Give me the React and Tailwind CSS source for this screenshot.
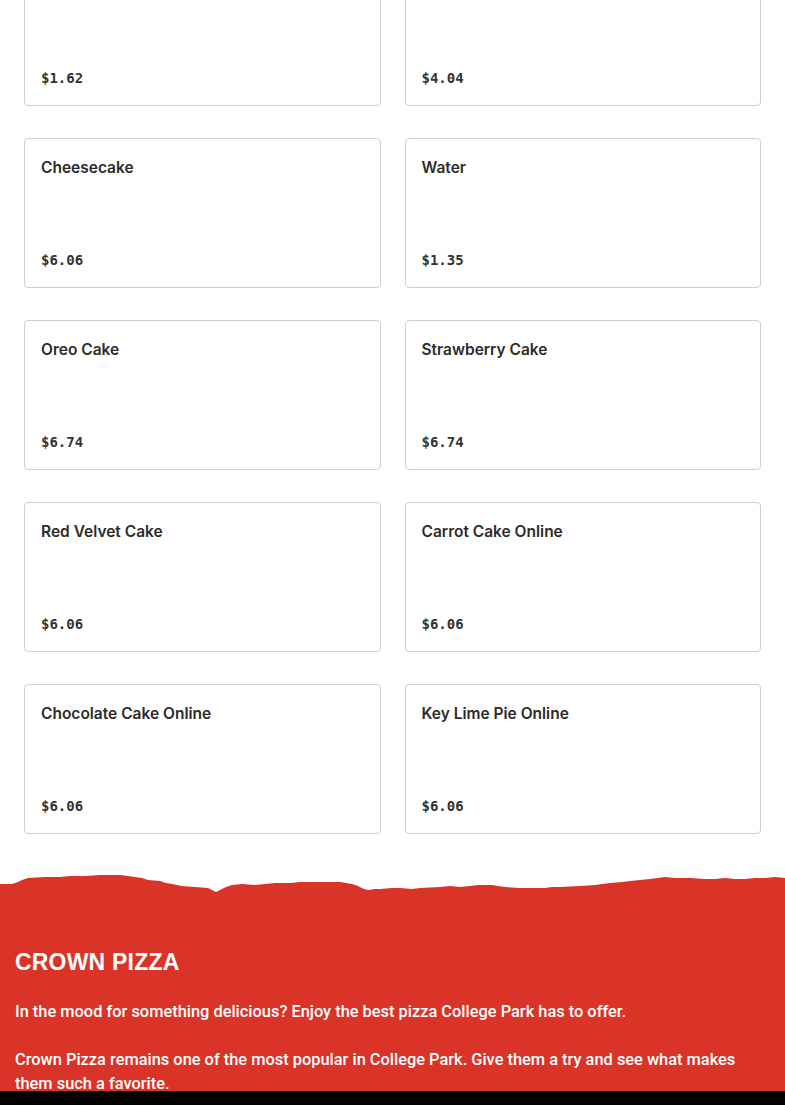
import React from "react";

const items = [
    { name: "", price: "$1.62" },
    { name: "", price: "$4.04" },
    { name: "Cheesecake", price: "$6.06" },
    { name: "Water", price: "$1.35" },
    { name: "Oreo Cake", price: "$6.74" },
    { name: "Strawberry Cake", price: "$6.74" },
    { name: "Red Velvet Cake", price: "$6.06" },
    { name: "Carrot Cake Online", price: "$6.06" },
    { name: "Chocolate Cake Online", price: "$6.06" },
    { name: "Key Lime Pie Online", price: "$6.06" },
];

function MenuCard({ item }) {
    return (
        <div className="h-[150px] flex flex-col justify-between border border-[#cfcfcf] rounded-[4px] bg-white px-4 pt-4 pb-4">
            <h3 className="text-[15.5px] leading-[26px] font-semibold text-[#2b2b2b] font-['Inter',sans-serif]">
                {item.name}
            </h3>
            <span className="text-[14px] leading-[22px] font-semibold text-[#333333] font-['DejaVu_Sans_Mono',monospace]">
                {item.price}
            </span>
        </div>
    );
}

export default function App() {
    return (
        <div className="min-h-screen bg-white overflow-hidden">

            {/* MENU GRID */}
            <div className="grid grid-cols-2 gap-x-6 gap-y-8 px-6 mt-[-44px]">
                {items.map((item, i) => (
                    <MenuCard key={i} item={item} />
                ))}
            </div>

            {/* TORN EDGE */}
            <svg
                className="block w-full h-[26px] mt-[34px]"
                viewBox="0 0 785 26"
                preserveAspectRatio="none"
            >
                <path
                    fill="#d93427"
                    d="M0 16 L12 16 L18 14 L22 12 L28 10 L45 9 L60 9 L70 8 L85 8 L100 7 L120 7 L128 8 L135 9 L142 10 L148 12 L160 13 L166 15 L172 16 L182 18 L195 19 L208 20 L212 22 L216 24 L220 22 L226 19 L232 17 L242 16 L255 17 L265 16 L275 15 L290 15 L300 14 L320 14 L340 14 L346 15 L352 16 L358 18 L364 21 L368 22 L375 21 L380 21 L392 20 L400 20 L412 21 L420 20 L440 19 L450 18 L460 19 L470 18 L478 17 L492 17 L498 18 L505 19 L520 20 L545 20 L552 19 L560 19 L580 18 L595 17 L610 15 L622 14 L630 13 L640 12 L650 11 L665 9 L675 10 L690 10 L705 11 L715 11 L725 10 L735 11 L745 11 L755 10 L765 10 L775 9 L785 10 L785 26 L0 26 Z"
                />
            </svg>

            {/* ABOUT */}
            <section className="bg-[#d93427] text-white pl-[15px] pr-[20px] pt-[54px] pb-10">
                <h2 className="text-[23px] leading-7 font-black uppercase tracking-[0.2px] mb-6 font-['Liberation_Sans',Arial,sans-serif]">
                    Crown Pizza
                </h2>
                <div className="font-['Roboto',sans-serif] text-[16.4px] leading-6 font-medium">
                    <p className="mb-6">
                        In the mood for something delicious? Enjoy the best pizza College Park has to offer.
                    </p>
                    <p>
                        Crown Pizza remains one of the most popular in College Park. Give them a try and see what makes them such a favorite.
                    </p>
                </div>
            </section>

            {/* BOTTOM BAR */}
            <div className="fixed bottom-0 left-0 right-0 h-[14px] bg-black" />
        </div>
    );
}
